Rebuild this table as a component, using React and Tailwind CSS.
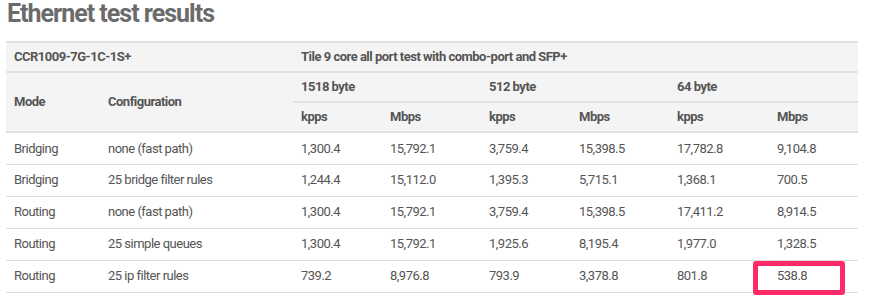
const rows = [
  ["Bridging", "none (fast path)", "1,300.4", "15,792.1", "3,759.4", "15,398.5", "17,782.8", "9,104.8"],
  ["Bridging", "25 bridge filter rules", "1,244.4", "15,112.0", "1,395.3", "5,715.1", "1,368.1", "700.5"],
  ["Routing", "none (fast path)", "1,300.4", "15,792.1", "3,759.4", "15,398.5", "17,411.2", "8,914.5"],
  ["Routing", "25 simple queues", "1,300.4", "15,792.1", "1,925.6", "8,195.4", "1,977.0", "1,328.5"],
  ["Routing", "25 ip filter rules", "739.2", "8,976.8", "793.9", "3,378.8", "801.8", "538.8"],
];

const widths = [94, 193, 89, 99, 90, 98, 100, 89];

export default function App() {
  return (
    <div
      className="w-[869px] h-[296px] bg-white pl-[6px] text-[#555]"
      style={{ fontFamily: 'Roboto, "Liberation Sans", sans-serif' }}
    >
      <h2 className="text-[25px] leading-[28px] font-bold tracking-[-1px] text-[#6b6b6b] pl-[1px] h-[41px]">
        Ethernet test results
      </h2>
      <table className="w-[852px] border-collapse table-fixed text-[13px] tracking-[-0.5px]">
        <colgroup>
          {widths.map((w, i) => (
            <col key={i} style={{ width: w }} />
          ))}
        </colgroup>
        <thead className="bg-[#f4f4f4] text-[#555]">
          <tr className="h-[30px] border-t-2 border-[#e2e2e2]">
            <th colSpan={2} className="text-left font-bold px-2">CCR1009-7G-1C-1S+</th>
            <th colSpan={6} className="text-left font-bold px-2">Tile 9 core all port test with combo-port and SFP+</th>
          </tr>
          <tr className="h-[30px] border-t-2 border-[#e2e2e2]">
            <th rowSpan={2} className="text-left font-bold px-2 border-b-2 border-[#e2e2e2]">Mode</th>
            <th rowSpan={2} className="text-left font-bold px-2 border-b-2 border-[#e2e2e2]">Configuration</th>
            <th colSpan={2} className="text-left font-bold px-2">1518 byte</th>
            <th colSpan={2} className="text-left font-bold px-2">512 byte</th>
            <th colSpan={2} className="text-left font-bold px-2">64 byte</th>
          </tr>
          <tr className="h-[30px] border-t-2 border-b-2 border-[#e2e2e2]">
            {["kpps", "Mbps", "kpps", "Mbps", "kpps", "Mbps"].map((h, i) => (
              <th key={i} className="text-left font-bold px-2">{h}</th>
            ))}
          </tr>
        </thead>
        <tbody>
          {rows.map((r, ri) => (
            <tr key={ri} className="h-[32px] border-b border-[#dcdcdc]">
              {r.map((c, ci) => (
                <td key={ci} className="px-2 relative">
                  {c}
                  {ri === 4 && ci === 7 && (
                    <span className="absolute left-[-16px] top-0 w-[92px] h-[34px] border-[5px] border-[#fc2a66] rounded-[3px]" />
                  )}
                </td>
              ))}
            </tr>
          ))}
        </tbody>
      </table>
    </div>
  );
}
